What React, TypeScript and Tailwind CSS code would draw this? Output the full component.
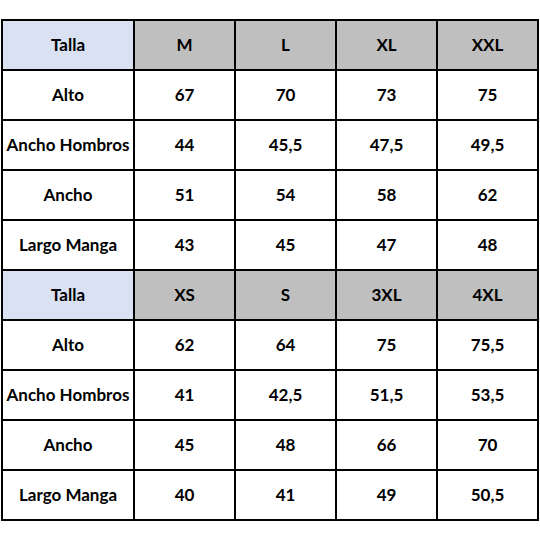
import { Fragment } from "react";

const sections = [
  {
    sizes: ["M", "L", "XL", "XXL"],
    rows: [
      ["Alto", "67", "70", "73", "75"],
      ["Ancho Hombros", "44", "45,5", "47,5", "49,5"],
      ["Ancho", "51", "54", "58", "62"],
      ["Largo Manga", "43", "45", "47", "48"],
    ],
  },
  {
    sizes: ["XS", "S", "3XL", "4XL"],
    rows: [
      ["Alto", "62", "64", "75", "75,5"],
      ["Ancho Hombros", "41", "42,5", "51,5", "53,5"],
      ["Ancho", "45", "48", "66", "70"],
      ["Largo Manga", "40", "41", "49", "50,5"],
    ],
  },
];

const cell = "h-[50px] border-2 border-black p-0 text-center";

export default function App() {
  return (
    <main className="h-[540px] w-[540px] bg-white pt-[19px] pl-px font-['Lato','Open_Sans',sans-serif] text-[17px] font-bold text-black">
      <table className="w-[536px] table-fixed border-collapse">
        <colgroup>
          <col className="w-[132px]" />
          <col className="w-[101px]" />
          <col className="w-[101px]" />
          <col className="w-[101px]" />
          <col className="w-[101px]" />
        </colgroup>
        <tbody>
          {sections.map((section, i) => (
            <Fragment key={i}>
              <tr>
                <td className={`${cell} bg-[#d9e1f2]`}>Talla</td>
                {section.sizes.map((s) => (
                  <td key={s} className={`${cell} bg-[#bfbfbf]`}>
                    {s}
                  </td>
                ))}
              </tr>
              {section.rows.map((row) => (
                <tr key={row[0]}>
                  {row.map((v, j) => (
                    <td key={j} className={`${cell} whitespace-nowrap`}>
                      {v}
                    </td>
                  ))}
                </tr>
              ))}
            </Fragment>
          ))}
        </tbody>
      </table>
    </main>
  );
}
